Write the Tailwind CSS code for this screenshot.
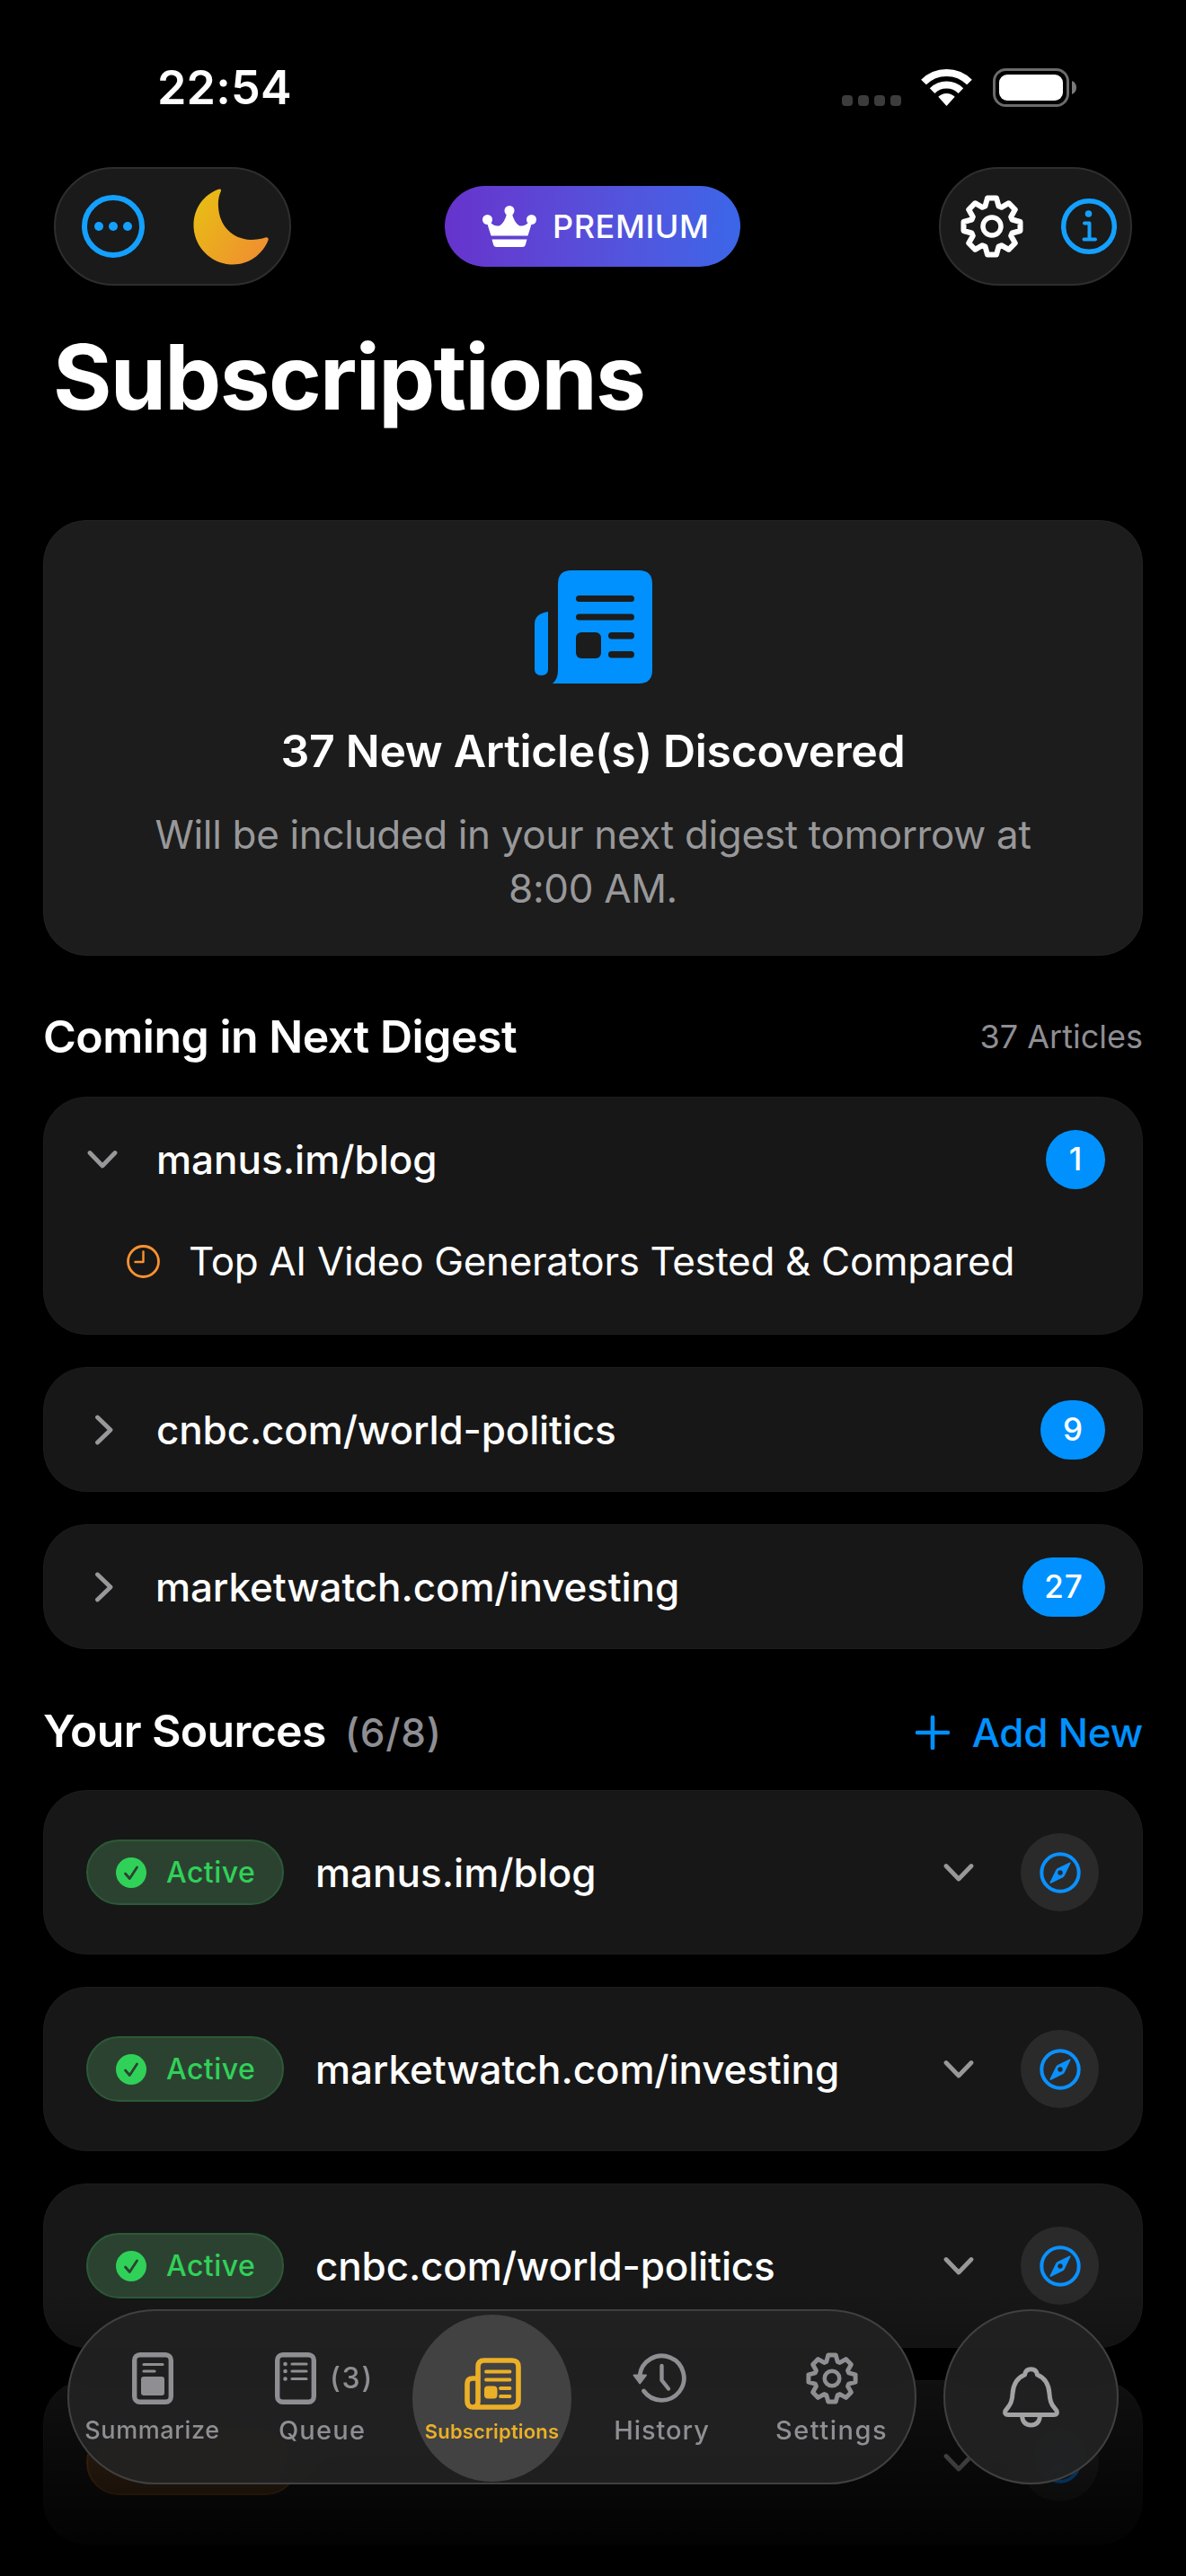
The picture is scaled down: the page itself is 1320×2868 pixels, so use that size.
<!DOCTYPE html>
<html lang="en">
<head>
  <meta charset="UTF-8">
  <meta name="viewport" content="width=device-width, initial-scale=1.0">
  <title>Subscriptions</title>
  <script src="https://cdn.jsdelivr.net/npm/@tailwindcss/browser@4"></script>
</head>
<body class="bg-black text-white font-[Inter,sans-serif]">

  <!-- Shared icons -->
  <svg class="hidden">
    <symbol id="gear" viewBox="-35 -35 70 70">
      <g fill="none" stroke="currentColor" stroke-width="6" stroke-linejoin="round">
        <path d="M-5 -31.5 L5 -31.5 L7.5 -22.5 L10.6 -21.2 L18.7 -25.8 L25.8 -18.7 L21.2 -10.6 L22.5 -7.5 L31.5 -5 L31.5 5 L22.5 7.5 L21.2 10.6 L25.8 18.7 L18.7 25.8 L10.6 21.2 L7.5 22.5 L5 31.5 L-5 31.5 L-7.5 22.5 L-10.6 21.2 L-18.7 25.8 L-25.8 18.7 L-21.2 10.6 L-22.5 7.5 L-31.5 5 L-31.5 -5 L-22.5 -7.5 L-21.2 -10.6 L-25.8 -18.7 L-18.7 -25.8 L-10.6 -21.2 L-7.5 -22.5 Z"/>
        <circle r="10" stroke-width="5.5"/>
      </g>
    </symbol>
    <symbol id="chevron-down" viewBox="0 0 34 22">
      <path d="M3 3.5 L17 18 L31 3.5" fill="none" stroke="currentColor" stroke-width="4.8" stroke-linecap="round" stroke-linejoin="round"/>
    </symbol>
    <symbol id="chevron-right" viewBox="0 0 22 34">
      <path d="M3.5 3 L18 17 L3.5 31" fill="none" stroke="currentColor" stroke-width="4.8" stroke-linecap="round" stroke-linejoin="round"/>
    </symbol>
    <symbol id="check" viewBox="0 0 34 34">
      <circle cx="17" cy="17" r="17" fill="#30d158"/>
      <path d="M10.5 18 L15.3 23.5 L23.5 11" fill="none" stroke="#2c4231" stroke-width="2.8" stroke-linecap="round" stroke-linejoin="round"/>
    </symbol>
    <symbol id="compass" viewBox="0 0 46 46">
      <circle cx="23" cy="23" r="20.7" fill="none" stroke="#0a91ff" stroke-width="4"/>
      <path fill="#0a91ff" fill-rule="evenodd" d="M33.5 11.6 q1.6 -.6 1 1 L28 26 q-.6 1.4 -2 2.2 L12.8 34.8 q-1.8 .6 -1.2 -1.2 L18.2 20 q.7 -1.4 2 -2 Z M23 20.2 a2.8 2.8 0 1 0 .01 0 Z"/>
    </symbol>
  </svg>

  <div class="relative h-[2868px] w-[1320px] overflow-hidden">

    <!-- Status bar -->
    <div class="flex h-[186px] items-start justify-between pl-[175px] pr-[122px] pt-[65px]">
      <div class="flex h-[66px] items-center text-[52px] font-semibold tracking-[0.2px]">22:54</div>
      <div class="flex h-[64px] items-center">
        <div class="mt-[30px] flex gap-[6px]">
          <span class="size-[12px] rounded-[4px] bg-[#3c3c3c]"></span>
          <span class="size-[12px] rounded-[4px] bg-[#3c3c3c]"></span>
          <span class="size-[12px] rounded-[4px] bg-[#3c3c3c]"></span>
          <span class="size-[12px] rounded-[4px] bg-[#3c3c3c]"></span>
        </div>
        <svg class="ml-[22px] h-[42px] w-[57px]" viewBox="0 0 57 42">
          <path d="M3 15.5 A36 36 0 0 1 54 15.5 M12.6 25.1 A22.5 22.5 0 0 1 44.4 25.1" fill="none" stroke="#fff" stroke-width="8"/>
          <path d="M28.5 42 L19.3 31.8 A13 13 0 0 1 37.7 31.8 Z" fill="#fff"/>
        </svg>
        <svg class="ml-[23px] h-[43px] w-[93px]" viewBox="0 0 93 43">
          <rect x="1.5" y="1.5" width="82" height="40" rx="13" fill="none" stroke="#6b6b6b" stroke-width="3"/>
          <rect x="7" y="7" width="71" height="29" rx="9" fill="#fff"/>
          <path d="M88 14 q5 2 5 7.5 t-5 7.5 Z" fill="#7a7a7a"/>
        </svg>
      </div>
    </div>

    <!-- Toolbar -->
    <header class="flex h-[132px] items-center justify-between px-[60px]">
      <div class="flex h-[132px] w-[264px] items-center justify-between rounded-full border-2 border-[#2e2e2e] bg-[#1a1a1a] pl-[29px] pr-[22px]">
        <svg class="size-[70px]" viewBox="0 0 70 70">
          <circle cx="35" cy="35" r="32" fill="none" stroke="#14a0ff" stroke-width="6"/>
          <g fill="#14a0ff"><circle cx="19" cy="35" r="5"/><circle cx="35" cy="35" r="5"/><circle cx="51" cy="35" r="5"/></g>
        </svg>
        <svg class="size-[85px]" viewBox="0 0 85 85">
          <defs>
            <linearGradient id="moon" x1="0" y1="0.2" x2="1" y2="0.9">
              <stop offset="0" stop-color="#e8bd14"/>
              <stop offset="1" stop-color="#f08c32"/>
            </linearGradient>
          </defs>
          <path fill="url(#moon)" d="M31 2.5 C28.5 8 27.5 14 28 20 C29 41 43 56 64 57 C70 57 76 56 81 54.2 Q84.5 54 83.5 57.5 C77 73.5 62 84.5 44 84.5 C20 84.5 0.5 64.5 0.5 41 C0.5 22 11.5 7 28 0.8 Q31.5 0 31 2.5 Z"/>
        </svg>
      </div>

      <div class="mr-[50px] flex h-[90px] w-[329px] items-center rounded-full bg-linear-to-r from-[#6633cc] to-[#3b66e8] pl-[42px]">
        <svg class="h-[46px] w-[60px]" viewBox="0 0 60 46" fill="#fff">
          <circle cx="30" cy="5.5" r="5.5"/><circle cx="5.5" cy="15.5" r="5.5"/><circle cx="54.5" cy="15.5" r="5.5"/>
          <path d="M5 19 L8 18 Q14 24 19.5 22 Q25 18 27 9 H33 Q35 18 40.5 22 Q46 24 52 18 L55 19 L50.5 33.5 H9.5 Z"/>
          <path d="M10.5 37.5 H49.5 L48 43 Q47.4 46 44.5 46 H15.5 Q12.6 46 12 43 Z"/>
        </svg>
        <span class="ml-[18px] text-[36px] font-medium tracking-[0.6px]">PREMIUM</span>
      </div>

      <div class="flex h-[132px] w-[215px] items-center justify-between rounded-full border-2 border-[#2e2e2e] bg-[#1a1a1a] pl-[22px] pr-[15px]">
        <svg class="size-[70px]"><use href="#gear"/></svg>
        <svg class="size-[62px]" viewBox="0 0 62 62">
          <circle cx="31" cy="31" r="28.3" fill="none" stroke="#14a0ff" stroke-width="5.4"/>
          <circle cx="30.5" cy="17" r="3.8" fill="#14a0ff"/>
          <path d="M26 27.5 H31.5 V45 M25.5 45.5 H38" fill="none" stroke="#14a0ff" stroke-width="4" stroke-linecap="round" stroke-linejoin="round"/>
        </svg>
      </div>
    </header>

    <h1 class="mt-[42px] pl-[59px] text-[100px] leading-[120px] font-bold tracking-[-1.71px]">Subscriptions</h1>

    <main class="mt-[99px] px-[48px]">
      <!-- Digest summary -->
      <section class="flex h-[485px] flex-col items-center rounded-[48px] border border-[#222] bg-[#1c1c1c] pt-[55px] text-center">
        <svg class="h-[126px] w-[131px]" viewBox="0 0 131 126">
          <path fill="#0091ff" d="M15 46 V110 Q15 117 7.5 117 Q0 117 0 110 V60 Q0 48 15 46 Z"/>
          <path fill="#0091ff" d="M41 0 H116 Q131 0 131 15 V111 Q131 126 116 126 H20 Q26 121 26 111 V15 Q26 0 41 0 Z"/>
          <g fill="#1c1c1c">
            <rect x="46" y="28" width="65" height="7" rx="3.5"/>
            <rect x="46" y="48.5" width="65" height="7" rx="3.5"/>
            <rect x="46" y="69" width="28" height="29" rx="6"/>
            <rect x="82" y="69" width="29" height="7.5" rx="3.7"/>
            <rect x="82" y="90" width="29" height="7.5" rx="3.7"/>
          </g>
        </svg>
        <h2 class="mt-[45px] text-[50px] leading-[60px] font-semibold tracking-[-0.34px]">37 New Article(s) Discovered</h2>
        <p class="mt-[33px] w-[1060px] text-[44px] leading-[60px] tracking-[-0.34px] text-[#98989a]">Will be included in your next digest tomorrow at 8:00 AM.</p>
      </section>

      <!-- Next digest -->
      <div class="mt-[60px] flex h-[60px] items-center justify-between">
        <h2 class="text-[50px] font-semibold tracking-[-0.48px]">Coming in Next Digest</h2>
        <span class="text-[36px] text-[#8e8e93]">37 Articles</span>
      </div>

      <div class="mt-[37px] flex flex-col gap-[36px] text-[44px]">
        <div class="h-[265px] rounded-[48px] border border-[#1c1c1c] bg-[#171717]">
          <div class="flex h-[137px] items-center pl-[48px] pr-[41px]">
            <svg class="h-[22px] w-[34px] text-[#98989a]"><use href="#chevron-down"/></svg>
            <span class="ml-[43px] font-medium">manus.im/blog</span>
            <span class="ml-auto flex size-[66px] items-center justify-center rounded-full bg-[#0091ff] text-[35px] font-medium">1</span>
          </div>
          <div class="flex h-[90px] items-center pl-[92px]">
            <svg class="size-[37px]" viewBox="0 0 37 37" fill="none" stroke="#ff9230" stroke-linecap="round" stroke-linejoin="round">
              <circle cx="18.5" cy="18.5" r="17" stroke-width="2.8"/>
              <path d="M18.5 7.5 V19 H9.5" stroke-width="2.4"/>
            </svg>
            <span class="ml-[32px] tracking-[-0.33px]">Top AI Video Generators Tested &amp; Compared</span>
          </div>
        </div>

        <div class="flex h-[139px] items-center rounded-[48px] border border-[#1c1c1c] bg-[#171717] pl-[56px] pr-[41px]">
          <svg class="h-[34px] w-[22px] text-[#98989a]"><use href="#chevron-right"/></svg>
          <span class="ml-[47px] font-medium tracking-[-0.14px]">cnbc.com/world-politics</span>
          <span class="ml-auto flex h-[66px] w-[72px] items-center justify-center rounded-full bg-[#0091ff] text-[35px] font-medium">9</span>
        </div>

        <div class="flex h-[139px] items-center rounded-[48px] border border-[#1c1c1c] bg-[#171717] pl-[56px] pr-[41px]">
          <svg class="h-[34px] w-[22px] text-[#98989a]"><use href="#chevron-right"/></svg>
          <span class="ml-[46px] font-medium tracking-[-0.12px]">marketwatch.com/investing</span>
          <span class="ml-auto flex h-[66px] w-[92px] items-center justify-center rounded-full bg-[#0091ff] text-[35px] font-medium tracking-[1px]">27</span>
        </div>
      </div>

      <!-- Sources -->
      <div class="mt-[61px] flex h-[60px] items-center">
        <h2 class="text-[50px] font-semibold tracking-[-0.66px]">Your Sources</h2>
        <span class="ml-[21px] mt-[4px] text-[44px] font-medium tracking-[0.78px] text-[#8e8e93]">(6/8)</span>
        <a href="#" class="ml-auto mt-[4px] flex items-center text-[44px] font-medium tracking-[-0.23px] text-[#0091ff]">
          <svg class="mr-[25px] size-[38px]" viewBox="0 0 38 38">
            <path d="M19 2 V36 M2 19 H36" stroke="#0091ff" stroke-width="4.6" stroke-linecap="round"/>
          </svg>
          Add New
        </a>
      </div>

      <div class="mt-[36px] flex flex-col gap-[36px] text-[44px] font-medium">
        <div class="flex h-[183px] items-center rounded-[48px] border border-[#1c1c1c] bg-[#171717] pl-[47px] pr-[48px]">
          <div class="flex h-[73px] w-[220px] items-center rounded-full border-2 border-[#2b5a38] bg-[#2c4231] pl-[31px] text-[32px] tracking-[0.47px] text-[#30d158]">
            <svg class="mr-[22px] size-[34px]"><use href="#check"/></svg>
            Active
          </div>
          <span class="ml-[35px]">manus.im/blog</span>
          <svg class="ml-auto h-[22px] w-[34px] text-[#98989a]"><use href="#chevron-down"/></svg>
          <div class="ml-[52px] flex size-[87px] items-center justify-center rounded-full bg-[#2a2a2a]">
            <svg class="size-[46px]"><use href="#compass"/></svg>
          </div>
        </div>

        <div class="flex h-[183px] items-center rounded-[48px] border border-[#1c1c1c] bg-[#171717] pl-[47px] pr-[48px]">
          <div class="flex h-[73px] w-[220px] items-center rounded-full border-2 border-[#2b5a38] bg-[#2c4231] pl-[31px] text-[32px] tracking-[0.47px] text-[#30d158]">
            <svg class="mr-[22px] size-[34px]"><use href="#check"/></svg>
            Active
          </div>
          <span class="ml-[35px] tracking-[-0.12px]">marketwatch.com/investing</span>
          <svg class="ml-auto h-[22px] w-[34px] text-[#98989a]"><use href="#chevron-down"/></svg>
          <div class="ml-[52px] flex size-[87px] items-center justify-center rounded-full bg-[#2a2a2a]">
            <svg class="size-[46px]"><use href="#compass"/></svg>
          </div>
        </div>

        <div class="flex h-[183px] items-center rounded-[48px] border border-[#1c1c1c] bg-[#171717] pl-[47px] pr-[48px]">
          <div class="flex h-[73px] w-[220px] items-center rounded-full border-2 border-[#2b5a38] bg-[#2c4231] pl-[31px] text-[32px] tracking-[0.47px] text-[#30d158]">
            <svg class="mr-[22px] size-[34px]"><use href="#check"/></svg>
            Active
          </div>
          <span class="ml-[35px] tracking-[-0.14px]">cnbc.com/world-politics</span>
          <svg class="ml-auto h-[22px] w-[34px] text-[#98989a]"><use href="#chevron-down"/></svg>
          <div class="ml-[52px] flex size-[87px] items-center justify-center rounded-full bg-[#2a2a2a]">
            <svg class="size-[46px]"><use href="#compass"/></svg>
          </div>
        </div>

        <!-- Paused source, mostly under the tab bar -->
        <div class="flex h-[183px] items-center rounded-[48px] border border-[#1c1c1c] bg-[#171717] pl-[47px] pr-[48px]">
          <div class="h-[73px] w-[236px] rounded-full border-2 border-[#7a4a20] bg-[#57391f]"></div>
          <svg class="ml-auto h-[22px] w-[34px] text-[#98989a]"><use href="#chevron-down"/></svg>
          <div class="ml-[52px] flex size-[87px] items-center justify-center rounded-full bg-[#2a2a2a]">
            <svg class="size-[46px]"><use href="#compass"/></svg>
          </div>
        </div>
      </div>
    </main>

    <!-- Bottom fade -->
    <div class="absolute inset-x-0 bottom-0 h-[318px] bg-linear-to-b from-transparent via-black/60 via-60% to-black"></div>

    <!-- Tab bar -->
    <nav class="absolute top-[2571px] left-[75px] flex h-[195px] w-[945px] rounded-full bg-[#222]/90 text-[29px] leading-[36px] font-medium text-[#8e8e93] outline-2 -outline-offset-2 outline-[#404040] backdrop-blur-lg">
      <a href="#" class="flex w-[189px] flex-col items-center pt-[46px]">
        <span class="flex h-[62px] items-center">
          <svg class="h-[58px] w-[46px]" viewBox="0 0 46 58" fill="none" stroke="currentColor" stroke-linecap="round">
            <rect x="2.7" y="2.7" width="40.6" height="52.6" rx="6" stroke-width="5.4"/>
            <path d="M13 13.5 H34 M13 21 H25" stroke-width="3.2"/>
            <rect x="10" y="27" width="26" height="21" rx="3" fill="currentColor" stroke="none"/>
          </svg>
        </span>
        <span class="mt-[9px] text-[27px] tracking-[0.6px]">Summarize</span>
      </a>
      <a href="#" class="flex w-[189px] flex-col items-center pt-[46px]">
        <span class="flex h-[62px] items-center gap-[15px] pl-[5px]">
          <svg class="h-[58px] w-[46px]" viewBox="0 0 46 58" fill="none" stroke="currentColor" stroke-linecap="round">
            <rect x="2.7" y="2.7" width="40.6" height="52.6" rx="6" stroke-width="5.4"/>
            <path d="M19 13 H35 M19 21 H35 M19 29.5 H35" stroke-width="3.2"/>
            <path d="M11.5 13 h.01 M11.5 21 h.01 M11.5 29.5 h.01" stroke-width="4.6"/>
          </svg>
          <span class="text-[32px] tracking-[1.8px]">(3)</span>
        </span>
        <span class="mt-[9px] tracking-[1.2px]">Queue</span>
      </a>
      <a href="#" class="relative flex w-[189px] flex-col items-center pt-[46px] text-[#ebb027]">
        <span class="absolute top-[6px] left-[6px] h-[186px] w-[177px] rounded-[50%] bg-[#424243]"></span>
        <span class="relative flex h-[62px] items-center pt-[12px] pl-[2px]">
          <svg class="h-[58px] w-[63px]" viewBox="0 0 63 58" fill="none" stroke="currentColor" stroke-linecap="round">
            <path d="M9 55 H52 Q60 55 60 47 V10 Q60 3 53 3 H22 Q15 3 15 10 V49 Q15 55 9 55 Q3 55 3 48 V29 Q3 23 9 23 H14" stroke-width="5.6"/>
            <path d="M24 15.5 H50.5 M24 24.5 H50.5 M40 34 H50.5 M40 43 H50.5" stroke-width="3.8"/>
            <rect x="22" y="31.5" width="14.5" height="14" rx="4" fill="currentColor" stroke="none"/>
          </svg>
        </span>
        <span class="relative mt-[10px] text-[22px] font-semibold tracking-[0.15px]">Subscriptions</span>
      </a>
      <a href="#" class="flex w-[189px] flex-col items-center pt-[46px]">
        <span class="flex h-[62px] items-center pr-[5px]">
          <svg class="h-[56px] w-[60px]" viewBox="0 0 60 56" fill="none" stroke="currentColor" stroke-linecap="round" stroke-linejoin="round">
            <path d="M8 25 A24.7 24.7 0 1 1 12.5 42" stroke-width="4.8"/>
            <path d="M1.5 24.5 H15 L8.2 33.5 Z" fill="currentColor" stroke-width="2"/>
            <path d="M32.5 14 V30 L40 39.5" stroke-width="4.4"/>
          </svg>
        </span>
        <span class="mt-[9px] tracking-[0.95px]">History</span>
      </a>
      <a href="#" class="flex w-[189px] flex-col items-center pt-[46px]">
        <span class="flex h-[62px] items-center"><svg class="size-[58px]"><use href="#gear"/></svg></span>
        <span class="mt-[9px] tracking-[1.5px]">Settings</span>
      </a>
    </nav>

    <!-- Notifications -->
    <button class="absolute top-[2571px] left-[1050px] flex size-[195px] items-center justify-center rounded-full bg-[#222]/90 text-[#a3a3a5] outline-2 -outline-offset-2 outline-[#404040] backdrop-blur-lg">
      <svg class="h-[68px] w-[63px]" viewBox="0 0 63 68" fill="none" stroke="currentColor" stroke-width="5" stroke-linejoin="round">
        <path d="M24.5 9 Q25.5 2.7 31.5 2.7 Q37.5 2.7 38.5 9 Q51 14 52 30 Q52.5 40 57 45 L60 49 Q61.5 53.5 57 53.5 H6 Q1.5 53.5 3 49 L6 45 Q10.5 40 11 30 Q12 14 24.5 9 Z"/>
        <path d="M21.5 54 Q22 65 31.5 65 Q41 65 41.5 54"/>
      </svg>
    </button>
  </div>
</body>
</html>
